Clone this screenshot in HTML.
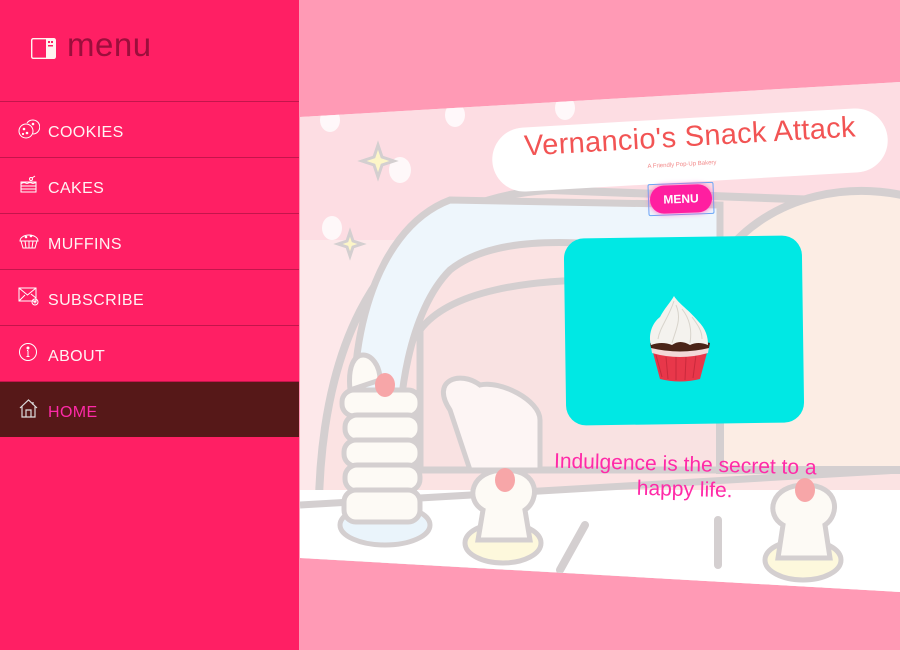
<!DOCTYPE html>
<html><head><meta charset="utf-8"><style>
*{margin:0;padding:0;box-sizing:border-box}
body{width:900px;height:650px;overflow:hidden;background:#ff9ab5;font-family:"Liberation Sans",sans-serif;position:relative}
#side{position:absolute;left:0;top:0;width:299px;height:650px;background:#ff1f64}
.logo{position:absolute;left:31px;top:38px}
.mt{position:absolute;left:67px;top:26px;font-size:33px;color:#9c0e3c;letter-spacing:0.5px}
.item{position:absolute;left:0;width:299px;height:56px;border-top:1px solid #c4154c;color:#fff3f3;font-size:16px;letter-spacing:0.4px}
.item span{position:absolute;left:48px;top:22px}
.item svg{position:absolute;left:18px;top:16px}
.home{background:#561818;color:#ff2aa8}
#main{position:absolute;left:300px;top:0;width:600px;height:650px}
.abs{position:absolute}
</style></head><body>
<div id="side">
<svg class="logo" width="25" height="21" viewBox="0 0 25 21"><rect x="0.7" y="0.7" width="23.6" height="19.6" rx="1.5" fill="none" stroke="#fff3f0" stroke-width="1.4"/><rect x="15" y="0.7" width="9.3" height="19.6" fill="#fff3f0"/><rect x="17" y="3" width="2" height="2" fill="#ff1f64"/><rect x="20" y="3" width="2" height="2" fill="#ff1f64"/><rect x="17" y="7" width="5" height="1.5" fill="#ff1f64"/></svg>
<div class="mt">menu</div>
<div class="item" style="top:101px"><svg width="22" height="22" viewBox="0 0 22 22" fill="none" stroke="#fff" stroke-width="1"><circle cx="8" cy="13" r="7"/><path d="M9 5a7 7 0 1 1 6 11"/><circle cx="6" cy="11" r=".8" fill="#fff"/><circle cx="9" cy="15" r=".8" fill="#fff"/><circle cx="5" cy="16" r=".6" fill="#fff"/><circle cx="15" cy="6" r=".8" fill="#fff"/></svg><span>COOKIES</span></div>
<div class="item" style="top:157px"><svg width="22" height="22" viewBox="0 0 22 22" fill="none" stroke="#fff" stroke-width="1"><rect x="3" y="8" width="15" height="10"/><path d="M3 12h15M3 15h15M3 9.5l3-1 3 1 3-1 3 1 3-1"/><circle cx="13" cy="5" r="1.5"/><path d="M14 4l3-2"/></svg><span>CAKES</span></div>
<div class="item" style="top:213px"><svg width="22" height="22" viewBox="0 0 22 22" fill="none" stroke="#fff" stroke-width="1"><path d="M2 11a9 6 0 0 1 18 0z"/><path d="M3 11l2 7h12l2-7M7 11l1 7M11 11v7M15 11l-1 7"/><circle cx="8" cy="7" r=".8" fill="#fff"/><circle cx="13" cy="6" r=".8" fill="#fff"/></svg><span>MUFFINS</span></div>
<div class="item" style="top:269px"><svg width="22" height="22" viewBox="0 0 22 22" fill="none" stroke="#fff" stroke-width="1"><rect x="1" y="2" width="17" height="13"/><path d="M1 2l8.5 7 8.5-7M1 15l6-6M18 12l-5-4"/><circle cx="17" cy="16" r="3"/><path d="M17 14.5v3M15.5 16h3"/></svg><span>SUBSCRIBE</span></div>
<div class="item" style="top:325px"><svg width="22" height="22" viewBox="0 0 22 22" fill="none" stroke="#fff" stroke-width="1"><circle cx="10" cy="10" r="8.5"/><circle cx="10" cy="6" r="1" fill="#fff"/><path d="M10 8.5v6M8.5 14.5h3M9 8.5h1"/></svg><span>ABOUT</span></div>
<div class="item home" style="top:381px"><svg width="22" height="22" viewBox="0 0 22 22" fill="none" stroke="#ddd" stroke-width="1.2"><path d="M2 10l8.5-8 8.5 8M4 8.5V19h13V8.5M8 19v-7h5v7M15 4v3"/></svg><span>HOME</span></div>
</div>
<div id="main">
<svg class="abs" style="left:0;top:0" width="600" height="650" viewBox="0 0 600 650">
<defs><clipPath id="c"><polygon points="0,117 600,82 600,592 0,558"/></clipPath></defs>
<g clip-path="url(#c)">
<rect width="600" height="650" fill="#fde8ea"/>
<rect x="0" y="80" width="600" height="160" fill="#fddde3"/>
<path d="M20 560 C10 380 60 200 250 190 L520 200 C600 200 620 260 620 300 L620 600 Z" fill="#fbe3e3" stroke="#d4cfd0" stroke-width="8"/>
<path d="M60 470 C40 360 70 230 150 200 L420 205 L420 260 C300 240 200 230 150 270 C110 310 95 400 100 470Z" fill="#eef6fc" stroke="#d4cfd0" stroke-width="7"/>
<path d="M120 330 C150 290 230 280 300 280 L470 290 L470 470 L120 470Z" fill="#f9e2e2" stroke="#d4cfd0" stroke-width="7"/>
<path d="M420 260 C470 190 560 180 620 200 L620 470 L420 470Z" fill="#fcede4" stroke="#d4cfd0" stroke-width="8"/>
<rect x="0" y="490" width="600" height="110" fill="#fff"/>
<path d="M0 505 L600 470" stroke="#d4cfd0" stroke-width="7"/>
<ellipse cx="85" cy="525" rx="45" ry="20" fill="#eaf4fb" stroke="#d4cfd0" stroke-width="5"/>
<g fill="#fdfaf5" stroke="#d4cfd0" stroke-width="5">
<rect x="42" y="390" width="78" height="26" rx="12"/><rect x="45" y="415" width="75" height="26" rx="12"/><rect x="44" y="440" width="76" height="26" rx="12"/><rect x="45" y="465" width="75" height="26" rx="12"/><rect x="44" y="490" width="76" height="32" rx="12"/>
<path d="M50 390 C45 340 80 350 80 380 Z"/>
<ellipse cx="203" cy="543" rx="38" ry="20" fill="#fdf8dc"/>
<path d="M178 540 L183 510 C165 500 170 470 205 470 C240 470 240 500 225 510 L230 540Z"/>
<ellipse cx="503" cy="560" rx="38" ry="20" fill="#fdf8dc"/>
<path d="M478 558 L483 525 C465 515 470 485 505 485 C540 485 540 515 525 525 L530 558Z"/>
<path d="M150 410 C130 380 160 370 180 385 C200 380 240 400 240 420 L240 470 L170 470Z" fill="#fdf5f4"/>
</g>
<g fill="#f7a6a8"><ellipse cx="85" cy="385" rx="10" ry="12"/><ellipse cx="205" cy="480" rx="10" ry="12"/><ellipse cx="505" cy="490" rx="10" ry="12"/></g>
<g fill="#fff" opacity=".8"><ellipse cx="30" cy="120" rx="10" ry="12"/><ellipse cx="155" cy="115" rx="10" ry="12"/><ellipse cx="265" cy="108" rx="10" ry="12"/><ellipse cx="100" cy="170" rx="11" ry="13"/><ellipse cx="32" cy="228" rx="10" ry="12"/></g>
<path d="M78 145 l4 12 12 4 -12 4 -4 12 -4-12 -12-4 12-4z" fill="#fdf6c8" stroke="#d4cfd0" stroke-width="3"/>
<path d="M50 232 l3 9 9 3 -9 3 -3 9 -3-9 -9-3 9-3z" fill="#fdf6c8" stroke="#d4cfd0" stroke-width="3"/>
<path d="M285 525 L260 570 M418 520 L418 565" stroke="#d4cfd0" stroke-width="8" stroke-linecap="round"/>
</g>
</svg>
<div class="abs" style="left:192px;top:118px;width:396px;height:64px;background:#fff;border-radius:32px;transform:rotate(-3.3deg)"></div>
<div class="abs" style="left:182px;top:121px;width:416px;text-align:center;transform:rotate(-3.3deg);color:#f25454;font-size:29px;letter-spacing:0.3px">Vernancio's Snack Attack</div>
<div class="abs" style="left:292px;top:162px;width:180px;text-align:center;transform:rotate(-3.3deg);color:#f28a8a;font-size:6px">A Friendly Pop-Up Bakery</div>
<div class="abs" style="left:348px;top:183px;width:66px;height:32px;border:1.5px solid #6aa6f6;border-radius:2px;transform:rotate(-2deg)"></div>
<div class="abs" style="left:350px;top:185px;width:62px;height:28px;background:#ff1fa0;border-radius:14px;transform:rotate(-2deg);color:#fff;font-weight:bold;font-size:12px;text-align:center;line-height:28px;box-shadow:0 0 6px #ff5fc0">MENU</div>
<div class="abs" style="left:265px;top:237px;width:238px;height:187px;background:#00e8e4;border-radius:20px;transform:rotate(-0.8deg)"></div>
<svg class="abs" style="left:346px;top:295px" width="68" height="88" viewBox="0 0 68 88">
<path d="M6 54 L14 84 Q34 89 54 84 L62 54Z" fill="#e8374a"/>
<path d="M10 60 L16 82 M20 62 L22 84 M30 62 L30 85 M40 62 L39 85 M50 60 L47 83" stroke="#c92a3c" stroke-width="1"/>
<path d="M5 52 Q34 60 63 52 L62 58 Q34 66 6 58Z" fill="#f3d8d8"/>
<path d="M4 48 Q34 40 64 48 L63 53 Q34 60 5 53Z" fill="#4a2418"/>
<path d="M5 50 C2 40 6 28 14 22 C18 14 24 8 28 1 C32 8 44 16 52 26 C60 34 62 42 62 50 Q52 46 44 50 Q34 44 26 50 Q16 46 5 50Z" fill="#f4f2ee"/>
<path d="M12 44 C14 32 22 24 28 6 M26 48 C30 34 36 24 30 10 M44 48 C46 36 44 24 36 14 M56 44 C56 36 52 30 46 22" stroke="#d8d4cc" fill="none"/>
</svg>
<div class="abs" style="left:230px;top:452px;width:310px;text-align:center;color:#ff2aa8;font-size:21px;line-height:25px;transform:rotate(1.5deg)">Indulgence is the secret to a happy life.</div>
</div>
</body></html>
